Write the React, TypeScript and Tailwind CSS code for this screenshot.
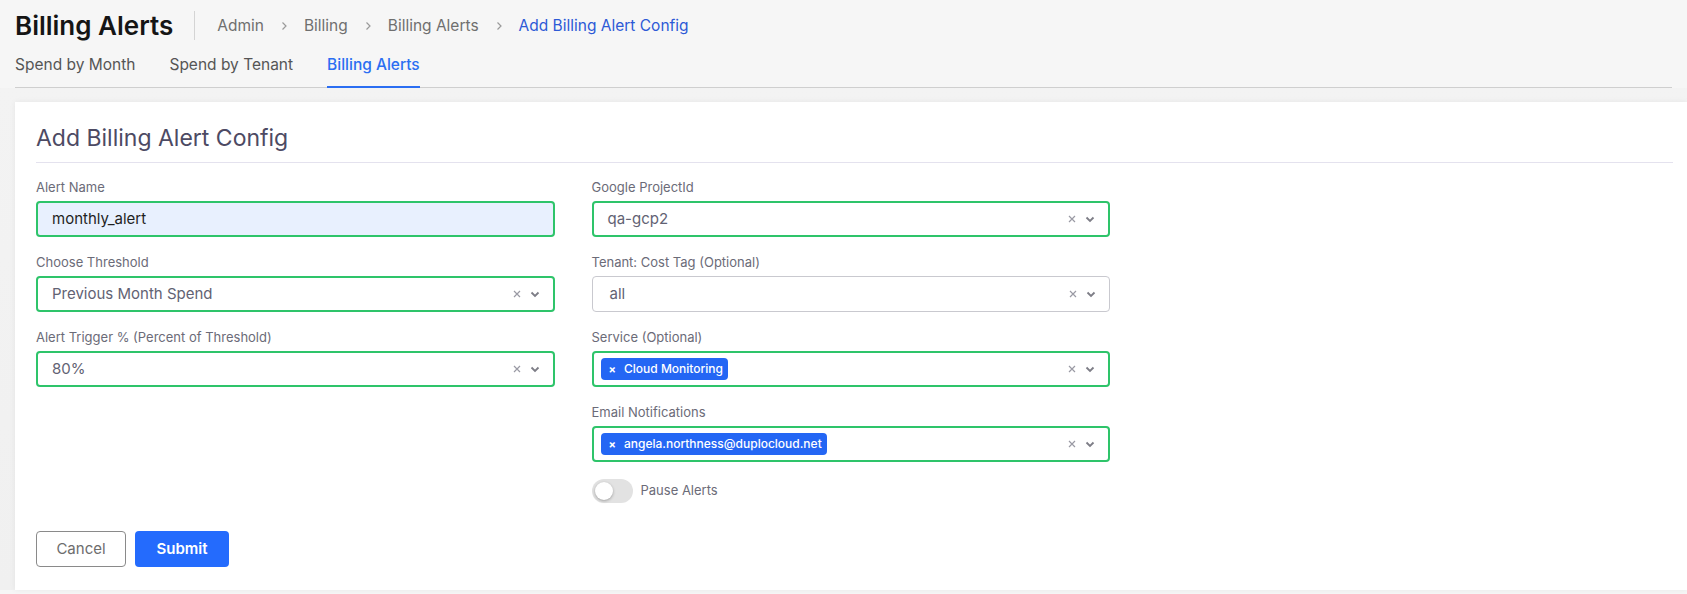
import React from "react";

const font = { fontFamily: "Inter, 'Open Sans', sans-serif" };

function ChevronRight() {
  return (
    <svg width="8" height="10" viewBox="0 0 8 10" className="shrink-0">
      <path d="M2.5 1.5 L6 5 L2.5 8.5" fill="none" stroke="#9a9a9a" strokeWidth="1.2" />
    </svg>
  );
}

function SelectIcons() {
  return (
    <div className="flex items-center gap-[9px] pr-[13px]">
      <svg width="8" height="8" viewBox="0 0 8 8">
        <path d="M1 1 L7 7 M7 1 L1 7" stroke="#9a9aa4" strokeWidth="1.2" />
      </svg>
      <svg width="10" height="7" viewBox="0 0 10 7">
        <path d="M1.5 1.5 L5 5 L8.5 1.5" fill="none" stroke="#7d7d86" strokeWidth="1.8" />
      </svg>
    </div>
  );
}

function Label({ children }: { children: React.ReactNode }) {
  return <div className="h-[16px] text-[13px] leading-[16px] text-[#6b6b78]">{children}</div>;
}

function SelectBox({ value, gray }: { value: string; gray?: boolean }) {
  return (
    <div
      className={`mt-[6px] flex h-[36px] items-center justify-between rounded-[4px] bg-white ${
        gray ? "border border-[#c9c9cf]" : "border-2 border-[#2ec46a]"
      }`}
    >
      <span className={`text-[15px] text-[#626273] ${gray ? "pl-[17px]" : "pl-[14px]"}`}>{value}</span>
      <SelectIcons />
    </div>
  );
}

function TagBox({ tag }: { tag: string }) {
  return (
    <div className="mt-[6px] flex h-[36px] items-center justify-between rounded-[4px] border-2 border-[#2ec46a] bg-white">
      <div className="pl-[7px]">
        <span className="flex h-[22px] items-center gap-[8px] rounded-[4px] bg-[#2466f4] pl-[8px] pr-[5px] text-[12px] font-medium text-white">
          <span className="text-[11px] font-bold">×</span>
          <span>{tag}</span>
        </span>
      </div>
      <SelectIcons />
    </div>
  );
}

export default function App() {
  return (
    <div className="min-h-[594px] w-full bg-[#f6f6f6]" style={font}>
      <div className="px-[15px]">
        <div className="flex h-[51px] items-center">
          <h1 className="text-[26px] font-semibold text-[#151515]">Billing Alerts</h1>
          <div className="ml-[21px] h-[29px] w-px bg-[#d4d4d4]" />
          <nav className="ml-[22px] flex items-center gap-[16px] text-[15.5px] text-[#6f6f6f]">
            <span>Admin</span>
            <ChevronRight />
            <span>Billing</span>
            <ChevronRight />
            <span>Billing Alerts</span>
            <ChevronRight />
            <span className="text-[#2d5ad6]">Add Billing Alert Config</span>
          </nav>
        </div>
        <div className="flex items-end gap-[34px] border-b border-[#cfcfcf] text-[15.5px]">
          <div className="flex h-[36px] items-center pb-[8px] text-[#555]">Spend by Month</div>
          <div className="flex h-[36px] items-center pb-[8px] text-[#555]">Spend by Tenant</div>
          <div className="relative flex h-[36px] items-center pb-[8px] font-medium text-[#2b6ef2]">
            Billing Alerts
            <div className="absolute bottom-[-1px] left-0 right-0 h-[2px] bg-[#2b6ef2]" />
          </div>
        </div>
      </div>
      <div className="bg-gradient-to-b from-[#f3f3f3] to-[#f0f0f0] pl-[15px] pt-[14px]">
        <div className="bg-white pb-[23px] pl-[21px] pr-[14px] pt-[21px] shadow-[0_0_6px_rgba(0,0,0,0.06)]">
          <div className="h-[30px] text-[23px] leading-[30px] text-[#4d4a63]">Add Billing Alert Config</div>
          <div className="mt-[9px] h-px bg-[#e4e2ee]" />
          <div className="mt-[16px] grid w-[1074px] grid-cols-2 gap-x-[37px]">
            <div className="flex flex-col gap-[17px]">
              <div>
                <Label>Alert Name</Label>
                <div className="mt-[6px] flex h-[36px] items-center rounded-[4px] border-2 border-[#2ec46a] bg-[#e8f0fe] pl-[14px] text-[15px] text-[#1f1f1f]">
                  monthly_alert
                </div>
              </div>
              <div>
                <Label>Choose Threshold</Label>
                <SelectBox value="Previous Month Spend" />
              </div>
              <div>
                <Label>Alert Trigger % (Percent of Threshold)</Label>
                <SelectBox value="80%" />
              </div>
            </div>
            <div className="flex flex-col gap-[17px]">
              <div>
                <Label>Google ProjectId</Label>
                <SelectBox value="qa-gcp2" />
              </div>
              <div>
                <Label>Tenant: Cost Tag (Optional)</Label>
                <SelectBox value="all" gray />
              </div>
              <div>
                <Label>Service (Optional)</Label>
                <TagBox tag="Cloud Monitoring" />
              </div>
              <div>
                <Label>Email Notifications</Label>
                <TagBox tag="angela.northness@duplocloud.net" />
              </div>
              <div className="flex items-center gap-[8px]">
                <div className="relative h-[24px] w-[41px] rounded-full bg-[#e2e2e2]">
                  <div className="absolute left-[3px] top-[3px] h-[18px] w-[18px] rounded-full bg-white shadow-[0_1px_3px_rgba(0,0,0,0.3)]" />
                </div>
                <span className="text-[13px] text-[#6b6b78]">Pause Alerts</span>
              </div>
            </div>
          </div>
          <div className="mt-[28px] flex gap-[9px]">
            <button className="h-[36px] w-[90px] rounded-[4px] border border-[#8a8a8a] bg-white text-[15px] text-[#6d6d6d]">
              Cancel
            </button>
            <button className="h-[36px] w-[94px] rounded-[4px] bg-[#246bfd] text-[15px] font-semibold text-white">
              Submit
            </button>
          </div>
        </div>
      </div>
    </div>
  );
}
